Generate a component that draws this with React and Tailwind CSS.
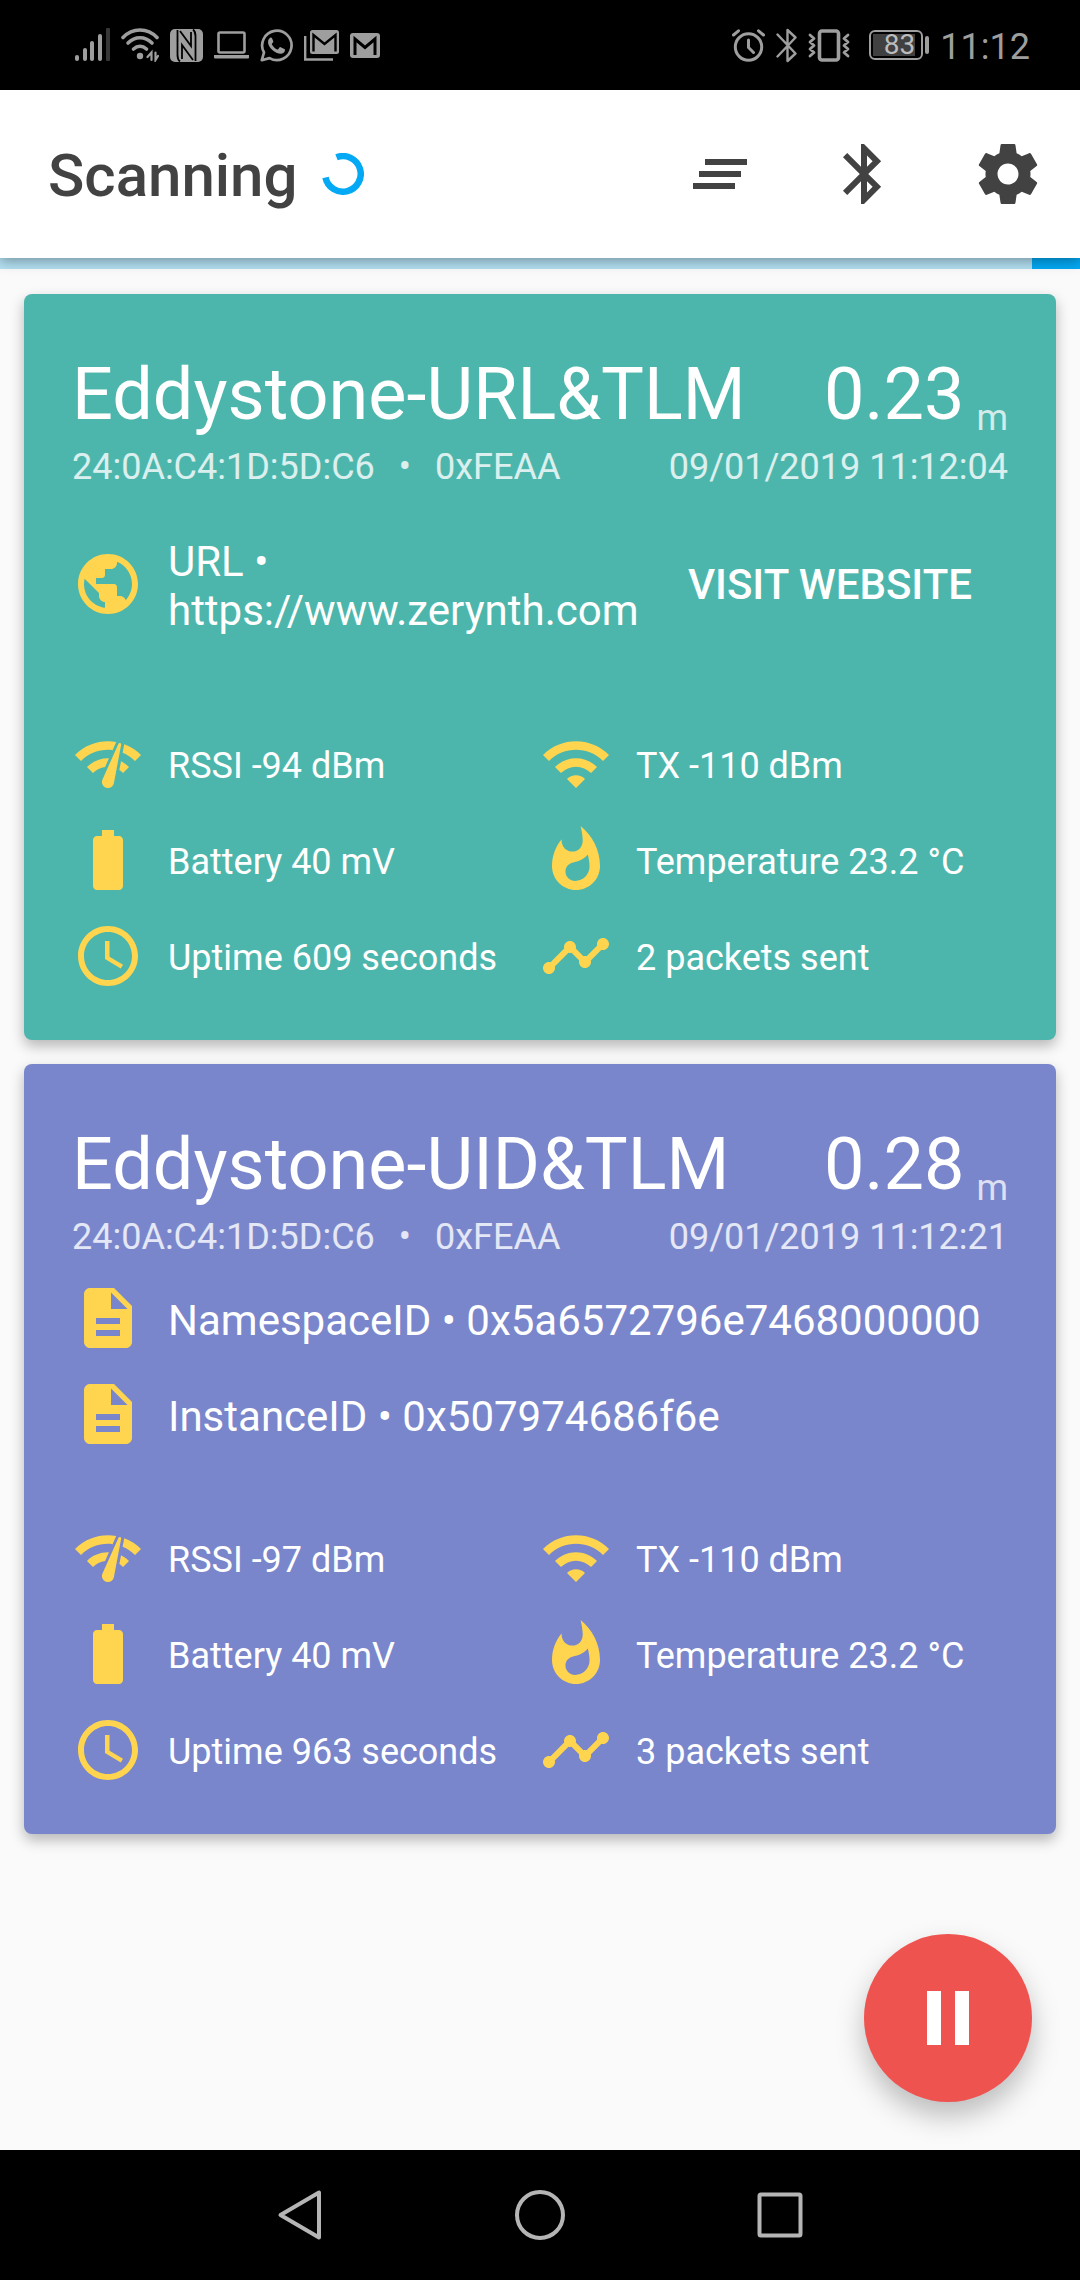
import {
  MdAccessTime,
  MdBatteryFull,
  MdBluetooth,
  MdClearAll,
  MdDescription,
  MdNetworkCheck,
  MdPublic,
  MdTimeline,
  MdWhatshot,
  MdWifi,
} from "react-icons/md";

const beacons = [
  {
    name: "Eddystone-URL&TLM",
    color: "bg-[#4db6ac]",
    distance: "0.23",
    mac: "24:0A:C4:1D:5D:C6",
    service: "0xFEAA",
    seen: "09/01/2019 11:12:04",
    url: "https://www.zerynth.com",
    rssi: -94,
    tx: -110,
    battery: 40,
    temperature: 23.2,
    uptime: 609,
    packets: 2,
  },
  {
    name: "Eddystone-UID&TLM",
    color: "bg-[#7986cb]",
    distance: "0.28",
    mac: "24:0A:C4:1D:5D:C6",
    service: "0xFEAA",
    seen: "09/01/2019 11:12:21",
    ids: [
      ["NamespaceID", "0x5a6572796e7468000000"],
      ["InstanceID", "0x507974686f6e"],
    ],
    rssi: -97,
    tx: -110,
    battery: 40,
    temperature: 23.2,
    uptime: 963,
    packets: 3,
  },
];

function SignalIcon() {
  return (
    <svg className="w-[35px] h-[34px]" viewBox="0 0 35 34" fill="currentColor" aria-hidden="true">
      <rect x="0" y="27" width="4" height="6" rx="2" />
      <rect x="8" y="20" width="4" height="13" rx="2" />
      <rect x="15" y="13" width="4" height="20" rx="2" />
      <rect x="23" y="6" width="4" height="27" rx="2" />
      <rect x="31" y="0" width="4" height="33" rx="1" opacity="0.35" />
    </svg>
  );
}

function WifiDataIcon() {
  return (
    <svg className="w-[38px] h-[34px]" viewBox="0 0 38 34" fill="none" stroke="currentColor" strokeWidth="3.6" strokeLinecap="round" aria-hidden="true">
      <path d="M2 9.5C11.5-.5 26.5-.5 36 9.5" />
      <path d="M7 15C14 8 24 8 31 15" />
      <path d="M12.5 21C16.5 17.5 21.5 17.5 25.5 21" />
      <circle cx="19" cy="28" r="3.2" fill="currentColor" stroke="none" />
      <path d="M30.5 32V24.5L26.500 29M34.500 24.500V32L37 28" strokeWidth="2.2" />
    </svg>
  );
}

function NfcIcon() {
  return (
    <svg className="size-[33px]" viewBox="0 0 33 33" aria-hidden="true">
      <rect width="33" height="33" rx="5" fill="currentColor" />
      <path d="M7.5 1V26C7.500 29 8 31 10 32.500M10 2L21 17V3M25.500 32V7C25.500 4 25 2 23 .5M23 31L12 16V30" fill="none" stroke="#000" strokeWidth="1.8" />
    </svg>
  );
}

function LaptopIcon() {
  return (
    <svg className="w-[35px] h-[28px]" viewBox="0 0 35 28" aria-hidden="true">
      <rect x="4.5" y="1.5" width="26" height="20" rx="1.5" fill="none" stroke="currentColor" strokeWidth="2.6" />
      <path d="M0 24H35V26.500Q35 27.500 34 27.500H1Q0 27.500 0 26.500Z" fill="currentColor" />
    </svg>
  );
}

function WhatsAppIcon() {
  return (
    <svg className="size-[33px]" viewBox="0 0 33 33" aria-hidden="true">
      <path d="M1.8 31.2L4 23.5A14.7 14.7 0 1 1 9.5 29.1Z" fill="none" stroke="currentColor" strokeWidth="2.7" strokeLinejoin="round" />
      <path d="M11 8.5c-1 0-3 1.6-3 4.6 0 6 7.5 11.700 12.600 11.700 2.400 0 4.400-1.700 4.400-3.800 0-.5-.2-.7-.6-.9l-3.800-1.900c-.4-.2-.8-.1-1.100.3l-1.300 1.700c-.3.3-.6.4-1 .2-2-.9-4.200-2.900-5.300-5-.2-.4-.1-.6.2-.9l1-1.300c.3-.3.3-.6.2-.9L11.900 9.100c-.2-.4-.5-.6-.9-.6z" fill="currentColor" />
    </svg>
  );
}

function MailStackIcon() {
  return (
    <svg className="w-[35px] h-[31px]" viewBox="0 0 35 31" fill="none" aria-hidden="true">
      <rect x="6" y="0" width="29" height="24" rx="2.5" fill="currentColor" />
      <path d="M9.500 21.500V5L20.500 14L31.500 5V21.500" stroke="#000" strokeWidth="2.4" />
      <path d="M1.200 6V29.500H29" stroke="currentColor" strokeWidth="2.4" />
    </svg>
  );
}

function MailIcon() {
  return (
    <svg className="w-[30px] h-[25px]" viewBox="0 0 30 25" fill="none" aria-hidden="true">
      <rect width="30" height="25" rx="3" fill="currentColor" />
      <path d="M5 22V6L15 14.5L25 6V22" stroke="#000" strokeWidth="3" />
    </svg>
  );
}

function AlarmIcon() {
  return (
    <svg className="size-[33px]" viewBox="0 0 33 33" fill="none" stroke="currentColor" strokeWidth="3" strokeLinecap="round" aria-hidden="true">
      <circle cx="16.5" cy="18" r="13.2" />
      <path d="M16.500 11V18.500L21.500 23.500M1.500 6L6.500 1.800M31.500 6L26.500 1.800" />
    </svg>
  );
}

function StatusBluetoothIcon() {
  return (
    <svg className="w-[21px] h-[35px]" viewBox="0 0 21 35" fill="none" stroke="currentColor" strokeWidth="2.4" strokeLinejoin="round" strokeLinecap="round" aria-hidden="true">
      <path d="M1.5 6.5L19.500 25.500L11.500 33V2L19.500 9.500L1.500 28.500" />
    </svg>
  );
}

function VibrateIcon() {
  return (
    <svg className="w-[42px] h-[33px]" viewBox="0 0 42 33" fill="none" stroke="currentColor" strokeWidth="2.8" strokeLinecap="round" strokeLinejoin="round" aria-hidden="true">
      <rect x="11.5" y="2" width="19" height="29" rx="2.5" strokeWidth="3.6" />
      <path d="M2 6L6 9.500L2 13L6 16.500L2 20L6 23.500L2 27" />
      <path d="M40 6L36 9.500L40 13L36 16.500L40 20L36 23.500L40 27" />
    </svg>
  );
}

function BatteryLevel({ level }) {
  return (
    <div className="ml-2 flex items-center gap-0.5">
      <div className="flex h-[30px] w-[54px] rounded-md border-2 border-current p-0.5">
        <div className="flex w-[42px] items-center justify-end bg-[#404040]">
          <span className="text-[28px] leading-none text-[#bdbdbd]">{level}</span>
        </div>
      </div>
      <div className="h-[18px] w-1 rounded-full bg-current" />
    </div>
  );
}

function StatusBar() {
  return (
    <div className="flex h-[90px] shrink-0 items-center justify-between bg-black pl-[75px] pr-[50px] text-[#9e9e9e]">
      <div className="flex items-center gap-[11px]">
        <SignalIcon />
        <WifiDataIcon />
        <NfcIcon />
        <LaptopIcon />
        <WhatsAppIcon />
        <MailStackIcon />
        <MailIcon />
      </div>
      <div className="flex items-center gap-[11px]">
        <AlarmIcon />
        <StatusBluetoothIcon />
        <VibrateIcon />
        <BatteryLevel level={83} />
        <span className="pt-1 text-[36px] leading-[42px]">11:12</span>
      </div>
    </div>
  );
}

function Spinner() {
  return (
    <svg className="size-[42px]" viewBox="0 0 42 42" fill="none" stroke="#03a9f4" strokeWidth="6.5" role="img" aria-label="Scanning in progress">
      <path d="M14.5 4.3A17.8 17.8 0 1 1 3.5 24.5" />
    </svg>
  );
}

function SettingsIcon() {
  return (
    <svg className="size-[72px]" viewBox="0 0 24 24" fill="currentColor" aria-hidden="true">
      <path d="M19.43 12.98c.04-.32.07-.64.07-.98s-.03-.66-.07-.98l2.11-1.65c.19-.15.24-.42.12-.64l-2-3.46c-.12-.22-.39-.3-.61-.22l-2.49 1c-.52-.4-1.08-.73-1.69-.98l-.38-2.65C14.46 2.18 14.25 2 14 2h-4c-.25 0-.46.18-.49.42l-.38 2.65c-.61.25-1.17.59-1.69.98l-2.49-1c-.23-.09-.49 0-.61.22l-2 3.46c-.13.22-.07.49.12.64l2.11 1.65c-.04.32-.07.65-.07.98s.03.66.07.98l-2.11 1.65c-.19.15-.24.42-.12.64l2 3.46c.12.22.39.3.61.22l2.49-1c.52.4 1.08.73 1.69.98l.38 2.65c.03.24.24.42.49.42h4c.25 0 .46-.18.49-.42l.38-2.65c.61-.25 1.17-.59 1.69-.98l2.49 1c.23.09.49 0 .61-.22l2-3.46c.12-.22.07-.49-.12-.64l-2.11-1.65zM12 15.5c-1.93 0-3.5-1.57-3.5-3.5s1.57-3.5 3.5-3.5 3.5 1.57 3.5 3.5-1.57 3.5-3.5 3.5z" />
    </svg>
  );
}

function ToolbarButton({ label, children }) {
  return (
    <button type="button" aria-label={label} className="flex size-36 items-center justify-center">
      {children}
    </button>
  );
}

function Toolbar() {
  return (
    <header className="relative z-10 flex h-[168px] shrink-0 items-center justify-between bg-white pl-12 text-[#424242] shadow-[0_3px_12px_rgba(0,0,0,0.35)]">
      <div className="flex items-center gap-6">
        <h1 className="pt-1 text-[60px] leading-[70px] font-medium">Scanning</h1>
        <Spinner />
      </div>
      <div className="flex">
        <ToolbarButton label="Clear list"><MdClearAll className="size-[72px]" /></ToolbarButton>
        <ToolbarButton label="Bluetooth"><MdBluetooth className="size-[72px]" /></ToolbarButton>
        <ToolbarButton label="Settings"><SettingsIcon /></ToolbarButton>
      </div>
    </header>
  );
}

function Stat({ icon: Icon, children }) {
  return (
    <li className="flex items-center gap-6">
      <Icon className="size-[72px] shrink-0 text-[#ffd54f]" aria-hidden="true" />
      <span className="pt-1 text-[36px] leading-[42px] whitespace-nowrap">{children}</span>
    </li>
  );
}

function BeaconCard({ beacon }) {
  return (
    <article className={`rounded-lg p-12 text-white shadow-[0_6px_14px_rgba(0,0,0,0.28)] ${beacon.color}`}>
      <div className="flex items-end justify-between">
        <h2 className="text-[72px] leading-[106px]">{beacon.name}</h2>
        <p className="flex items-end gap-3">
          <span className="text-[72px] leading-[106px]">{beacon.distance}</span>
          <span className="pb-2.5 text-[36px] leading-[40px] text-white/75">m</span>
        </p>
      </div>
      <div className="flex justify-between text-[36px] leading-[38px] text-white/80">
        <p className="flex gap-6">
          <span>{beacon.mac}</span>
          <span>•</span>
          <span>{beacon.service}</span>
        </p>
        <time>{beacon.seen}</time>
      </div>

      {beacon.url && (
        <div className="mt-[26px] flex min-h-36 items-center">
          <MdPublic className="size-[72px] shrink-0 text-[#ffd54f]" aria-hidden="true" />
          <p className="flex-1 pt-1 pl-6 text-[42px] leading-[49px]">URL • {beacon.url}</p>
          <a href={beacon.url} className="px-9 text-[42px] leading-[49px] font-medium whitespace-nowrap">
            VISIT WEBSITE
          </a>
        </div>
      )}
      {beacon.ids && (
        <ul className="mt-[26px] flex flex-col gap-6">
          {beacon.ids.map(([label, value]) => (
            <li key={label} className="flex items-center gap-6">
              <MdDescription className="size-[72px] shrink-0 text-[#ffd54f]" aria-hidden="true" />
              <span className="pt-1 text-[42px] leading-[49px]">{label} • {value}</span>
            </li>
          ))}
        </ul>
      )}

      <ul className="mt-[72px] grid grid-cols-2 gap-y-6">
        <Stat icon={MdNetworkCheck}>RSSI {beacon.rssi} dBm</Stat>
        <Stat icon={MdWifi}>TX {beacon.tx} dBm</Stat>
        <Stat icon={MdBatteryFull}>Battery {beacon.battery} mV</Stat>
        <Stat icon={MdWhatshot}>Temperature {beacon.temperature} °C</Stat>
        <Stat icon={MdAccessTime}>Uptime {beacon.uptime} seconds</Stat>
        <Stat icon={MdTimeline}>{beacon.packets} packets sent</Stat>
      </ul>
    </article>
  );
}

function NavigationBar() {
  return (
    <nav className="flex h-[130px] shrink-0 items-center justify-center gap-48 bg-black text-[#b5b5b5]">
      <button type="button" aria-label="Back">
        <svg className="size-12 overflow-visible" viewBox="0 0 48 48" fill="none" stroke="currentColor" strokeWidth="4" strokeLinejoin="round">
          <path d="M43 1.500V46.500L4.500 24Z" />
        </svg>
      </button>
      <button type="button" aria-label="Home">
        <svg className="size-12 overflow-visible" viewBox="0 0 48 48" fill="none" stroke="currentColor" strokeWidth="4">
          <circle cx="24" cy="24" r="23" />
        </svg>
      </button>
      <button type="button" aria-label="Recent apps">
        <svg className="size-12 overflow-visible" viewBox="0 0 48 48" fill="none" stroke="currentColor" strokeWidth="4">
          <rect x="3.5" y="3.5" width="41" height="41" rx="1.5" />
        </svg>
      </button>
    </nav>
  );
}

export default function App() {
  return (
    <div className="flex min-h-screen flex-col bg-[#fafafa] font-[Roboto,sans-serif]">
      <StatusBar />
      <Toolbar />
      <div className="flex h-[11px] justify-end bg-[#b3e0f2]" role="progressbar" aria-label="Scan progress">
        <div className="w-12 bg-[#03a9f4]" />
      </div>
      <main className="relative flex-1 px-6 pt-[25px]">
        <div className="flex flex-col gap-6">
          {beacons.map((beacon) => (
            <BeaconCard key={beacon.name} beacon={beacon} />
          ))}
        </div>
        <button
          type="button"
          aria-label="Pause scanning"
          className="absolute right-12 bottom-12 flex size-[168px] items-center justify-center rounded-full bg-[#ef5350] text-white shadow-[0_14px_28px_rgba(0,0,0,0.25)]"
        >
          <svg className="w-[42px] h-[54px]" viewBox="0 0 42 54" fill="currentColor">
            <path d="M0 0H14V54H0ZM28 0H42V54H28Z" />
          </svg>
        </button>
      </main>
      <NavigationBar />
    </div>
  );
}
